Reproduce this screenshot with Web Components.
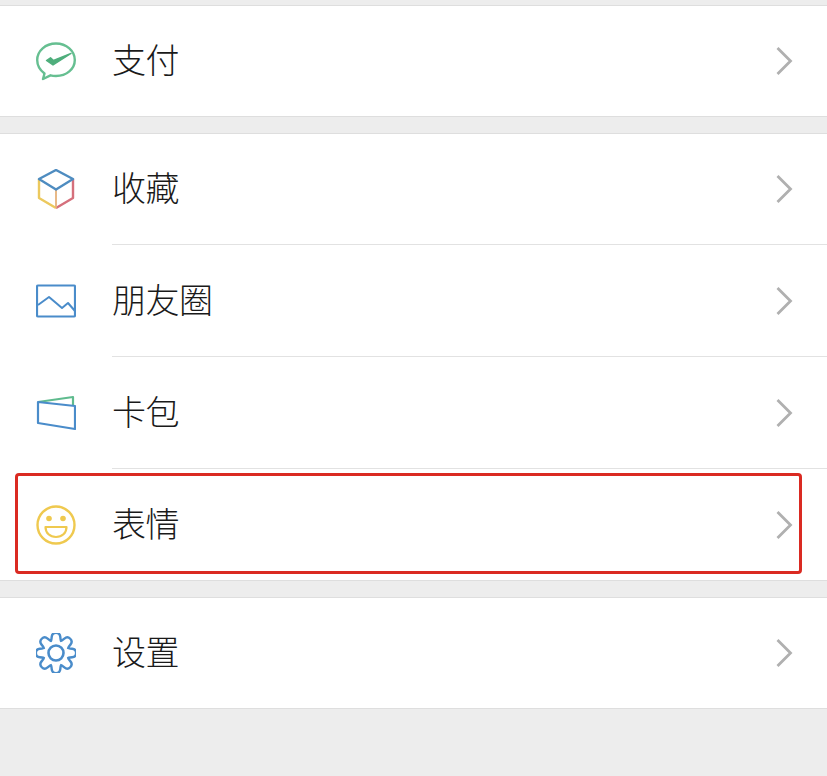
<!DOCTYPE html>
<html lang="zh">
<head>
<meta charset="utf-8">
<title>我</title>
<style>
html, body { margin: 0; padding: 0; background: #ededed; }
body { width: 827px; height: 776px; overflow: hidden; font-family: "Noto Sans CJK SC", "Liberation Sans", sans-serif; }
</style>
</head>
<body>
<wx-page>
  <wx-group>
    <wx-row><wx-icon slot="icon" name="pay"></wx-icon>支付</wx-row>
  </wx-group>
  <wx-group>
    <wx-row><wx-icon slot="icon" name="box"></wx-icon>收藏</wx-row>
    <wx-row><wx-icon slot="icon" name="photo"></wx-icon>朋友圈</wx-row>
    <wx-row><wx-icon slot="icon" name="card"></wx-icon>卡包</wx-row>
    <wx-row marked><wx-icon slot="icon" name="smile"></wx-icon>表情</wx-row>
  </wx-group>
  <wx-group>
    <wx-row><wx-icon slot="icon" name="gear"></wx-icon>设置</wx-row>
  </wx-group>
</wx-page>
<script>
// 8 rounded teeth, smoothed through the midpoints so the outline looks wavy like the reference
function gearPath() {
    const pts = [];
    for (let i = 0; i < 8; i++) {
        const a = i * 45 - 90;
        [[-21, 13], [-11, 20.5], [11, 20.5], [21, 13]].forEach(([d, r]) => {
            const t = (a + d) * Math.PI / 180;
            pts.push([20 + r * Math.cos(t), 20 + r * Math.sin(t)]);
        });
    }
    const mid = (p, q) => [(p[0] + q[0]) / 2, (p[1] + q[1]) / 2];
    const f = n => n.toFixed(2);
    const start = mid(pts[pts.length - 1], pts[0]);
    let d = `M${f(start[0])} ${f(start[1])}`;
    pts.forEach((p, i) => {
        const m = mid(p, pts[(i + 1) % pts.length]);
        d += `Q${f(p[0])} ${f(p[1])} ${f(m[0])} ${f(m[1])}`;
    });
    return d + 'z';
}

const ICONS = {
    pay: `<path d="M20 2.500C9.500 2.500 1.200 9.800 1.200 19c0 5.500 3 10.300 7.300 13.500L7 38l7.500-3.700c1.800.5 3.600.7 5.500.7 10.500 0 18.800-7 18.800-16S30.500 2.500 20 2.500z" fill="none" stroke="#66bf91" stroke-width="2.400" stroke-linejoin="round"/>
          <path d="M10.500 19.500L17 24 35 12.500 17.500 19.500l-3-2.800z" fill="#4fae7c" stroke="#4fae7c" stroke-width="1.400" stroke-linejoin="round"/>`,
    box: `<path d="M3 10v19l17 10" fill="none" stroke="#ecc95e" stroke-width="2.400" stroke-linejoin="round"/>
          <path d="M37 10v19L20 39" fill="none" stroke="#d5707c" stroke-width="2.400" stroke-linejoin="round"/>
          <path d="M20 21v18" fill="none" stroke="#e6b27a" stroke-width="1.800"/>
          <path d="M20 1L3 10l17 10.500L37 10z" fill="none" stroke="#4e8cc0" stroke-width="2.400" stroke-linejoin="round"/>`,
    photo: `<rect x="1" y="4.500" width="38" height="31" rx="1" fill="none" stroke="#4a8cca" stroke-width="2.200"/>
            <path d="M2 24l11-8 13 11 6-5 7 8" fill="none" stroke="#4a8cca" stroke-width="2" stroke-linejoin="round"/>`,
    card: `<path d="M2 9l35-5v8" fill="none" stroke="#5fbb8e" stroke-width="2.200" stroke-linejoin="round"/>
           <path d="M2 9l37 4v23L2 30z" fill="none" stroke="#4a8cca" stroke-width="2.200" stroke-linejoin="round"/>`,
    smile: `<circle cx="20" cy="20" r="18.500" fill="none" stroke="#efc94f" stroke-width="2.400"/>
            <circle cx="13" cy="13.500" r="2.800" fill="#efc94f"/><circle cx="27" cy="13.500" r="2.800" fill="#efc94f"/>
            <path d="M9.500 22h21c0 6-4.500 10-10.500 10S9.500 28 9.500 22z" fill="none" stroke="#efc94f" stroke-width="2.200" stroke-linejoin="round"/>`,
    gear: `<path d="${gearPath()}" fill="none" stroke="#4a8cca" stroke-width="2.400" stroke-linejoin="round"/>
           <circle cx="20" cy="20" r="7.500" fill="none" stroke="#4a8cca" stroke-width="2.600"/>`
};

class WxPage extends HTMLElement {
    constructor() {
        super();
        this.attachShadow({mode: 'open'});
        this.shadowRoot.innerHTML = `<style>
        :host { display: flex; flex-direction: column; gap: 16px; padding-top: 5px; }
        </style><slot></slot>`;
    }
}

class WxGroup extends HTMLElement {
    constructor() {
        super();
        this.attachShadow({mode: 'open'});
        this.shadowRoot.innerHTML = `<style>
        :host { display: block; background: #fff; border-top: 1px solid #dedede; border-bottom: 1px solid #dedede; }
        </style><slot></slot>`;
    }
}

class WxIcon extends HTMLElement {
    connectedCallback() { // name is only known once the element is in the page
        if (this.shadowRoot) return;
        this.attachShadow({mode: 'open'});
        this.shadowRoot.innerHTML = `<style>
        :host { display: block; width: 40px; height: 40px; }
        svg { display: block; }
        </style><svg width="40" height="40" viewBox="0 0 40 40">${ICONS[this.getAttribute('name')]}</svg>`;
    }
}

class WxRow extends HTMLElement {
    constructor() {
        super();
        this.attachShadow({mode: 'open'});
        this.shadowRoot.innerHTML = `<style>
        :host { display: block; position: relative; }
        .row { display: flex; align-items: center; height: 110px; padding: 0 34px 0 36px; color: #1a1a1a; font-size: 34px; font-weight: 300; line-height: 1; }
        .icon { width: 40px; margin-right: 36px; }
        .label { flex: 1; padding-bottom: 4px; letter-spacing: -0.5px; }
        .line { height: 1px; margin-left: 112px; background: #e2e2e2; margin-bottom: 1px; }
        :host(:last-child) .line { display: none; }
        .mark { display: none; position: absolute; left: 15px; top: 3px; width: 781px; height: 95px; border: 3px solid #da2a22; border-radius: 4px; }
        :host([marked]) .mark { display: block; }
        </style>
        <div class="row">
          <div class="icon"><slot name="icon"></slot></div>
          <div class="label"><slot></slot></div>
          <svg width="18" height="30" viewBox="0 0 18 30"><path d="M2.500 2l13 13-13 13" fill="none" stroke="#b0b0b0" stroke-width="2.800"/></svg>
        </div>
        <div class="line"></div>
        <div class="mark"></div>`;
    }
}

customElements.define('wx-page', WxPage);
customElements.define('wx-group', WxGroup);
customElements.define('wx-icon', WxIcon);
customElements.define('wx-row', WxRow);
</script>
</body>
</html>
